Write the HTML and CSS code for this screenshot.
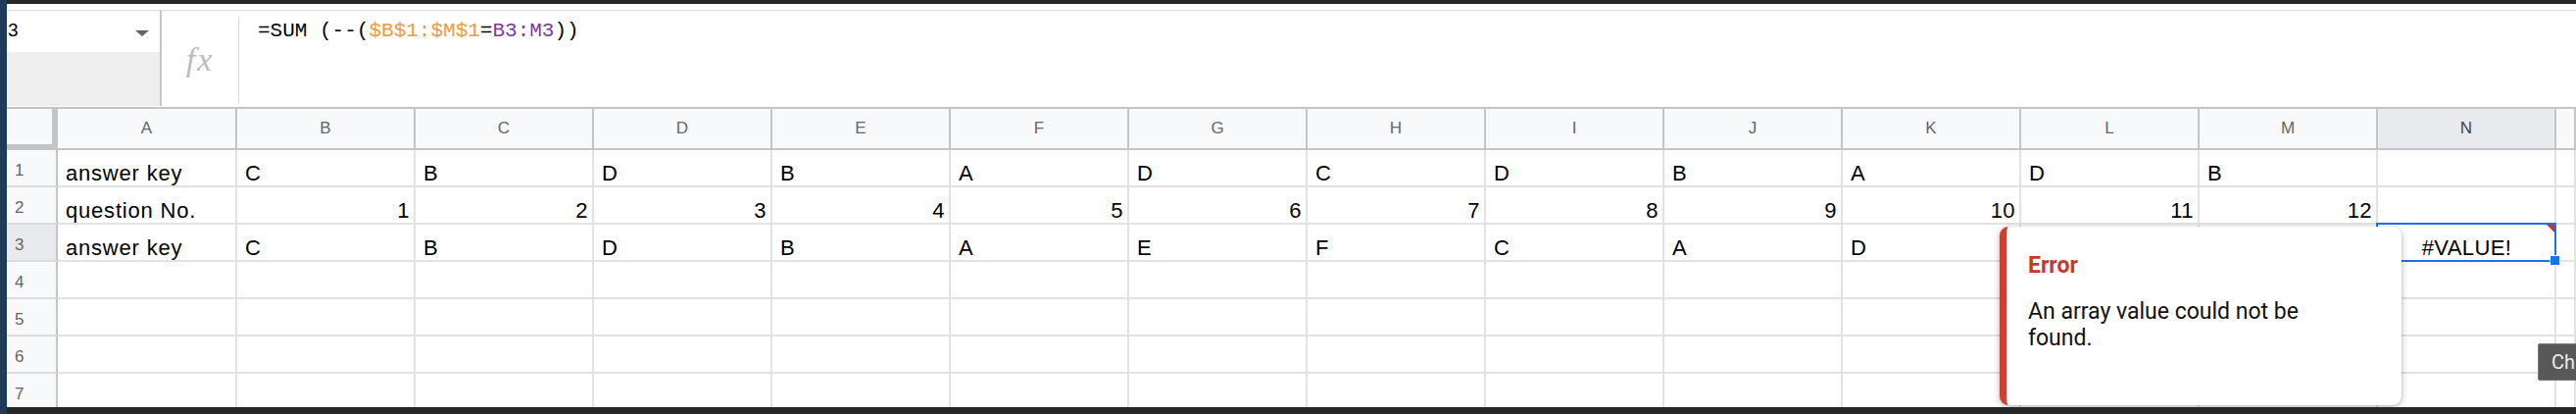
FILE: index.html
```html
<!DOCTYPE html>
<html>
<head>
<meta charset="utf-8">
<link rel="stylesheet" href="styles.css">
</head>
<body>
<div class="side"></div>
<div class="main">
  <div class="topbar"></div>
  <div class="topgap"></div>
  <div class="fbar">
    <div class="namebox">
      <div class="nb-top"><span class="nb-val">3</span><span class="nb-caret"></span></div>
      <div class="nb-bottom"></div>
    </div>
    <div class="fx">fx</div>
    <div class="fdiv"></div>
    <div class="formula">=SUM (--(<span class="ref1">$B$1:$M$1</span>=<span class="ref2">B3:M3</span>))</div>
  </div>
  <div class="sheet">
    <div class="corner"></div>
    <div class="h">A</div><div class="h">B</div><div class="h">C</div><div class="h">D</div><div class="h">E</div><div class="h">F</div><div class="h">G</div><div class="h">H</div><div class="h">I</div><div class="h">J</div><div class="h">K</div><div class="h">L</div><div class="h">M</div><div class="h hs">N</div><div class="h"></div>

    <div class="rh">1</div>
    <div class="c">answer key</div><div class="c">C</div><div class="c">B</div><div class="c">D</div><div class="c">B</div><div class="c">A</div><div class="c">D</div><div class="c">C</div><div class="c">D</div><div class="c">B</div><div class="c">A</div><div class="c">D</div><div class="c">B</div><div class="c"></div><div class="c"></div>

    <div class="rh">2</div>
    <div class="c">question No.</div><div class="c n">1</div><div class="c n">2</div><div class="c n">3</div><div class="c n">4</div><div class="c n">5</div><div class="c n">6</div><div class="c n">7</div><div class="c n">8</div><div class="c n">9</div><div class="c n">10</div><div class="c n">11</div><div class="c n">12</div><div class="c"></div><div class="c"></div>

    <div class="rh rhs">3</div>
    <div class="c">answer key</div><div class="c">C</div><div class="c">B</div><div class="c">D</div><div class="c">B</div><div class="c">A</div><div class="c">E</div><div class="c">F</div><div class="c">C</div><div class="c">A</div><div class="c">D</div><div class="c"></div><div class="c"></div>
    <div class="c err">#VALUE!
      <div class="sel"><div class="handle"></div></div>
      <div class="flag"></div>
      <div class="popup">
        <div class="popup-title">Error</div>
        <div class="popup-text">An array value could not be found.</div>
      </div>
    </div>
    <div class="c"></div>

    <div class="rh">4</div>
    <div class="c"></div><div class="c"></div><div class="c"></div><div class="c"></div><div class="c"></div><div class="c"></div><div class="c"></div><div class="c"></div><div class="c"></div><div class="c"></div><div class="c"></div><div class="c"></div><div class="c"></div><div class="c"></div><div class="c"></div>

    <div class="rh">5</div>
    <div class="c"></div><div class="c"></div><div class="c"></div><div class="c"></div><div class="c"></div><div class="c"></div><div class="c"></div><div class="c"></div><div class="c"></div><div class="c"></div><div class="c"></div><div class="c"></div><div class="c"></div><div class="c"></div><div class="c"></div>

    <div class="rh">6</div>
    <div class="c"></div><div class="c"></div><div class="c"></div><div class="c"></div><div class="c"></div><div class="c"></div><div class="c"></div><div class="c"></div><div class="c"></div><div class="c"></div><div class="c"></div><div class="c"></div><div class="c"></div><div class="c"></div><div class="c"></div>

    <div class="rh">7</div>
    <div class="c"></div><div class="c"></div><div class="c"></div><div class="c"></div><div class="c"></div><div class="c"></div><div class="c"></div><div class="c"></div><div class="c"></div><div class="c"></div><div class="c"></div><div class="c"></div><div class="c"></div><div class="c"></div><div class="c"></div>
  </div>
  <div class="bottombar"></div>
</div>
<div class="tooltip">Ch</div>
</body>
</html>
```
FILE: styles.css
```css
* { box-sizing: border-box; }
html, body { margin: 0; padding: 0; }
body {
  width: 2628px;
  height: 422px;
  overflow: hidden;
  background: #262626;
  display: flex;
  position: relative;
  font-family: "Liberation Sans", Arial, sans-serif;
}
.side {
  width: 7px;
  flex: 0 0 7px;
  background: #1f3b58;
}
.main {
  flex: 1;
  display: flex;
  flex-direction: column;
  background: #ffffff;
  min-width: 0;
}
.topbar { height: 4px; background: #262626; }
.topgap { height: 7px; background: #fff; border-bottom: 1px solid #d9d9d9; }
.fbar {
  height: 100px;
  display: flex;
  border-bottom: 2px solid #c4c4c4;
  background: #fff;
}
.namebox {
  width: 158px;
  flex: 0 0 158px;
  border-right: 2px solid #c6c6c6;
  display: flex;
  flex-direction: column;
  margin-bottom: 1px;
}
.nb-top {
  height: 42px;
  display: flex;
  justify-content: space-between;
  align-items: flex-start;
  padding: 8px 11px 0 1px;
}
.nb-val { font-size: 19px; line-height: 24px; color: #000; }
.nb-caret {
  margin-top: 12px;
  width: 0; height: 0;
  border-left: 7px solid transparent;
  border-right: 7px solid transparent;
  border-top: 6px solid #5f6368;
}
.nb-bottom { flex: 1; background: #eeeeee; }
.fx {
  width: 78px;
  flex: 0 0 78px;
  display: flex;
  align-items: center;
  justify-content: center;
  font-family: "Liberation Serif", "Times New Roman", serif;
  font-style: italic;
  font-size: 34px;
  letter-spacing: 2px;
  color: #bdbdbd;
  padding-top: 2px;
}
.fdiv {
  width: 1px;
  flex: 0 0 1px;
  background: #dadada;
  margin: 6px 0 4px;
}
.formula {
  padding: 9px 0 0 19px;
  font-family: "Liberation Mono", "Courier New", monospace;
  font-size: 21px;
  line-height: 24px;
  color: #000;
  white-space: nowrap;
}
.ref1 { color: #ef9a3c; }
.ref2 { color: #7b3e98; }

.sheet {
  display: grid;
  grid-template-columns: 52px 183px repeat(13, 182px) 1fr;
  grid-template-rows: 42px repeat(7, 38px);
  height: 304px;
  overflow: hidden;
  background: #fff;
}
.corner {
  background: #f8f9fa;
  border-right: 6px solid #c4c4c4;
  border-bottom: 6px solid #c4c4c4;
}
.h {
  background: #f8f9fa;
  border-right: 2px solid #c4c4c4;
  border-bottom: 2px solid #c4c4c4;
  display: flex;
  align-items: center;
  justify-content: center;
  font-size: 17px;
  color: #666;
}
.hs { background: #e8eaed; color: #444; }
.rh {
  background: #f8f9fa;
  border-right: 2px solid #c4c4c4;
  border-bottom: 2px solid #dcdcdc;
  display: flex;
  align-items: flex-end;
  padding: 0 0 4px 8px;
  font-size: 17px;
  line-height: 22px;
  color: #666;
}
.rhs { background: #e8eaed; }
.c {
  border-right: 2px solid #e2e2e2;
  border-bottom: 2px solid #e2e2e2;
  display: flex;
  align-items: flex-end;
  padding: 0 7px 0 8px;
  font-size: 22px;
  line-height: 24px;
  letter-spacing: 0.8px;
  color: #000;
  white-space: nowrap;
}
.n { justify-content: flex-end; padding-right: 4px; letter-spacing: 0.4px; }
.err {
  justify-content: center;
  position: relative;
  z-index: 2;
  letter-spacing: 0.4px;
}
.sel {
  position: absolute;
  left: -2px; top: -2px; right: -2px; bottom: -2px;
  border: 2px solid #1a73e8;
}
.handle {
  position: absolute;
  right: -6px; bottom: -6px;
  width: 11px; height: 11px;
  background: #1a73e8;
  border: 1px solid #fff;
}
.flag {
  position: absolute;
  top: 0; right: 0;
  width: 0; height: 0;
  border-top: 8px solid #d93025;
  border-left: 8px solid transparent;
}
.popup {
  position: absolute;
  top: 2px;
  right: 156px;
  width: 410px;
  height: 182px;
  background: #fff;
  border-left: 7px solid #cf4030;
  border-radius: 9px;
  box-shadow: 0 2px 7px rgba(0,0,0,0.28), 0 0 2px rgba(0,0,0,0.12);
  padding: 27px 20px 0 22px;
  font-family: Roboto, "Liberation Sans", sans-serif;
  letter-spacing: 0;
  white-space: normal;
  z-index: 3;
}
.popup-title {
  font-size: 23px;
  line-height: 26px;
  font-weight: 700;
  color: #c5392a;
}
.popup-text {
  margin-top: 20px;
  max-width: 300px;
  font-size: 23px;
  line-height: 27px;
  color: #111;
}
.bottombar { flex: 1; background: #262626; }
.tooltip {
  position: absolute;
  left: 2589px;
  top: 350px;
  width: 60px;
  height: 38px;
  background: #585858;
  border: 1px solid #7c7c7c;
  border-radius: 2px;
  padding: 7px 0 0 13px;
  font-family: Roboto, "Liberation Sans", sans-serif;
  font-size: 20px;
  line-height: 22px;
  color: #ececec;
}
```
